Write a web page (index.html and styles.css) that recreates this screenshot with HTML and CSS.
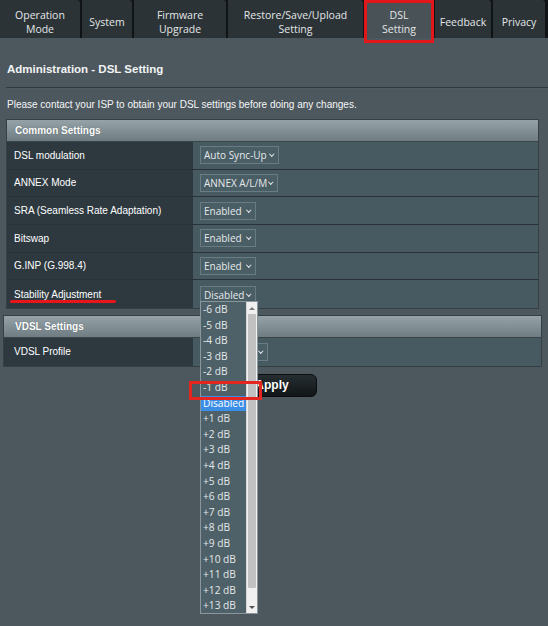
FILE: index.html
```html
<!DOCTYPE html>
<html>
<head>
<meta charset="utf-8">
<link rel="stylesheet" href="styles.css">
</head>
<body>
<nav class="tabs">
  <div class="tab t-op">Operation<br>Mode</div>
  <div class="tab t-sys">System</div>
  <div class="tab t-fw">Firmware<br>Upgrade</div>
  <div class="tab t-rs">Restore/Save/Upload<br>Setting</div>
  <div class="tab t-dsl active">DSL<br>Setting</div>
  <div class="tab t-fb">Feedback</div>
  <div class="tab t-pr">Privacy</div>
</nav>
<div class="mark-tab"></div>

<main class="content">
  <h1 class="title">Administration - DSL Setting</h1>
  <div class="sep"></div>
  <p class="desc">Please contact your ISP to obtain your DSL settings before doing any changes.</p>

  <section class="panel common">
    <div class="phead">Common Settings</div>
    <div class="row">
      <div class="lab">DSL modulation</div>
      <div class="val"><span class="sel w79">Auto Sync-Up<i class="chev"></i></span></div>
    </div>
    <div class="row">
      <div class="lab">ANNEX Mode</div>
      <div class="val"><span class="sel w78">ANNEX A/L/M<i class="chev"></i></span></div>
    </div>
    <div class="row">
      <div class="lab">SRA (Seamless Rate Adaptation)</div>
      <div class="val"><span class="sel w56">Enabled<i class="chev"></i></span></div>
    </div>
    <div class="row">
      <div class="lab">Bitswap</div>
      <div class="val"><span class="sel w56">Enabled<i class="chev"></i></span></div>
    </div>
    <div class="row">
      <div class="lab">G.INP (G.998.4)</div>
      <div class="val"><span class="sel w56">Enabled<i class="chev"></i></span></div>
    </div>
    <div class="row">
      <div class="lab"><span class="underlined">Stability Adjustment</span></div>
      <div class="val">
        <span class="selwrap">
          <span class="sel w56">Disabled<i class="chev"></i></span>
          <div class="dropdown">
            <ul class="opts">
              <li>-6 dB</li><li>-5 dB</li><li>-4 dB</li><li>-3 dB</li><li>-2 dB</li><li>-1 dB</li>
              <li class="chosen">Disabled</li>
              <li>+1 dB</li><li>+2 dB</li><li>+3 dB</li><li>+4 dB</li><li>+5 dB</li><li>+6 dB</li>
              <li>+7 dB</li><li>+8 dB</li><li>+9 dB</li><li>+10 dB</li><li>+11 dB</li><li>+12 dB</li><li>+13 dB</li>
            </ul>
            <div class="sbar">
              <div class="sb-btn"><i class="tri up"></i></div>
              <div class="sb-thumb"></div>
              <div class="sb-track"></div>
              <div class="sb-btn"><i class="tri down"></i></div>
            </div>
            <div class="mark-opt"></div>
          </div>
        </span>
      </div>
    </div>
  </section>

  <section class="panel vdsl">
    <div class="phead">VDSL Settings</div>
    <div class="row">
      <div class="lab">VDSL Profile</div>
      <div class="val"><span class="sel w68"><i class="chev"></i></span></div>
    </div>
  </section>

  <div class="actions"><button class="apply">Apply</button></div>
</main>
</body>
</html>
```

FILE: styles.css
```css
* { box-sizing: border-box; }

body {
  margin: 0;
  width: 548px;
  height: 626px;
  overflow: hidden;
  position: relative;
  background: #4d585e;
  color: #fff;
  font-family: "Liberation Sans", Arial, sans-serif;
}

/* ---------- tabs ---------- */
.tabs {
  display: flex;
  gap: 2px;
  height: 38px;
  background: #101416;
}
.tab {
  display: flex;
  align-items: center;
  justify-content: center;
  padding-top: 5px;
  background: #2b3337;
  color: #e4e6e7;
  font-family: "Open Sans", "Noto Sans", sans-serif;
  font-size: 10.5px;
  line-height: 14px;
  text-align: center;
  border-radius: 0 3px 0 0;
}
.tab.active { background: #485257; }
.t-op { width: 80px; }
.t-sys { width: 50px; }
.t-fw { width: 92px; }
.t-rs { width: 135px; }
.t-dsl { width: 68px; }
.t-fb { width: 56px; }
.t-pr { width: 52px; }

.mark-tab {
  position: absolute;
  left: 364px;
  top: 0;
  width: 70px;
  height: 43px;
  border: 3px solid #e2171c;
}

/* ---------- header text ---------- */
.title {
  margin: 23px 0 0 7px;
  font-size: 11.5px;
  line-height: 16px;
  font-weight: bold;
  color: #f2f4f5;
}
.sep {
  margin: 10px 0 0 6px;
  height: 1px;
  background: #30383c;
  box-shadow: 0 1px 0 #56626860;
}
.desc {
  margin: 10px 0 0 7px;
  font-size: 10px;
  line-height: 13px;
  color: #f4f6f7;
}

/* ---------- panels ---------- */
.panel {
  border: 1px solid #363f43;
}
.common { margin: 8px 9px 0 6px; }
.vdsl { margin: 6px 6px 0 3px; }

.phead {
  height: 22px;
  padding-left: 8px;
  display: flex;
  align-items: center;
  background: linear-gradient(#95a3a9, #6f7d83);
  font-size: 10px;
  font-weight: bold;
  color: #fff;
  text-shadow: 0 0 1px #4a565b;
  border-bottom: 1px solid #3a4549;
}
.vdsl .phead { padding-left: 11px; }

.row {
  display: grid;
  grid-template-columns: 186px 1fr;
  height: 27.67px;
  border-bottom: 1px solid #293236;
}
.row:last-child { border-bottom: 0; }
.vdsl .row { grid-template-columns: 189px 1fr; height: 28px; }

.lab {
  display: flex;
  align-items: center;
  padding-left: 7px;
  background: #2d393f;
  font-size: 10px;
  color: #fff;
}
.vdsl .lab { padding-left: 10px; }
.val {
  display: flex;
  align-items: center;
  padding-left: 7px;
  background: #475a62;
}

.underlined { position: relative; }
.underlined::after {
  content: "";
  position: absolute;
  left: -4px;
  top: 11px;
  width: 106px;
  height: 3px;
  border-radius: 2px;
  background: #e8161b;
}

/* ---------- select boxes ---------- */
.sel {
  position: relative;
  display: inline-flex;
  align-items: center;
  height: 18px;
  padding-left: 3px;
  background: #4a5e66;
  border: 1px solid #6a7c83;
  font-family: "Open Sans", "Noto Sans", sans-serif;
  font-size: 10px;
  color: #e6e9ea;
  white-space: nowrap;
  overflow: hidden;
}
.chev {
  position: absolute;
  right: 5px;
  top: 5px;
  width: 3.5px;
  height: 3.5px;
  border-right: 1.4px solid #e6e9ea;
  border-bottom: 1.4px solid #e6e9ea;
  transform: rotate(45deg);
}
.w56 { width: 56px; }
.w68 { width: 68px; }
.w78 { width: 78px; }
.w79 { width: 79px; }

.selwrap { position: relative; display: inline-block; height: 18px; }

/* ---------- dropdown ---------- */
.dropdown {
  position: absolute;
  left: 0;
  top: 16px;
  width: 58px;
  height: 313px;
  z-index: 5;
  display: flex;
  background: #4e6168;
  border: 1px solid #8a979c;
}
.opts {
  list-style: none;
  margin: 0;
  padding: 0;
  flex: 1;
}
.opts li {
  height: 15.6px;
  line-height: 15.6px;
  padding-left: 2px;
  font-family: "Open Sans", "Noto Sans", sans-serif;
  font-size: 10.2px;
  color: #e4e8e9;
  white-space: nowrap;
}
.opts li.chosen {
  background: #3a8ee6;
  color: #fff;
}
.sbar {
  width: 11px;
  display: flex;
  flex-direction: column;
  background: #f0f0f0;
  border-left: 1px solid #d8d8d8;
}
.sb-btn {
  height: 12px;
  display: flex;
  align-items: center;
  justify-content: center;
}
.sb-thumb {
  flex: 1;
  margin: 0 1px;
  background: #c1c1c1;
  border-radius: 1px;
}
.sb-track { height: 13px; }
.tri {
  width: 0;
  height: 0;
  border-left: 3px solid transparent;
  border-right: 3px solid transparent;
}
.tri.up { border-bottom: 3px solid #7a7a7a; }
.tri.down { border-top: 3px solid #505050; }

.mark-opt {
  position: absolute;
  left: -12px;
  top: 79px;
  width: 73px;
  height: 19px;
  border: 3px solid #e3261f;
}

/* ---------- apply ---------- */
.actions {
  display: flex;
  justify-content: center;
  padding-right: 4px;
  margin-top: 7px;
}
.apply {
  width: 90px;
  height: 23px;
  border: 1px solid #0b0e10;
  border-radius: 6px;
  background: linear-gradient(#262e32, #111517);
  color: #fff;
  font-family: "Liberation Sans", Arial, sans-serif;
  font-size: 12px;
  font-weight: bold;
}
```
